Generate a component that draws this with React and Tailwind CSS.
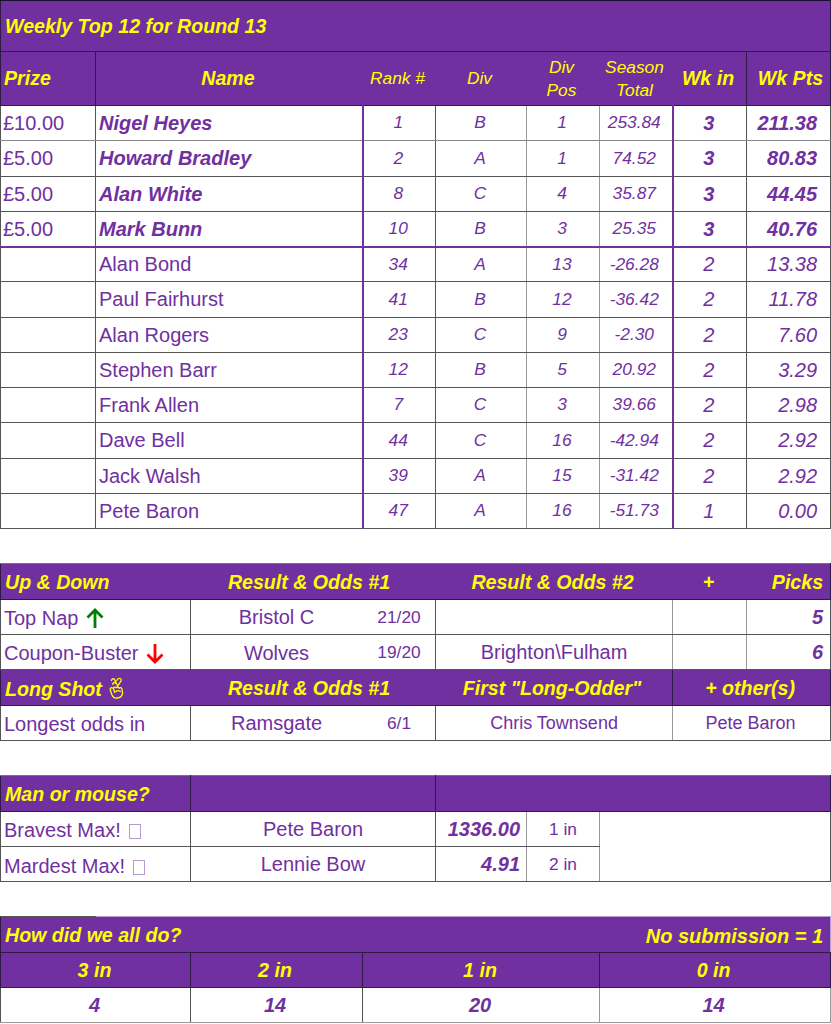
const purple = "text-[#7030a0]";

const top4 = [
  ["£10.00", "Nigel Heyes", "1", "B", "1", "253.84", "3", "211.38"],
  ["£5.00", "Howard Bradley", "2", "A", "1", "74.52", "3", "80.83"],
  ["£5.00", "Alan White", "8", "C", "4", "35.87", "3", "44.45"],
  ["£5.00", "Mark Bunn", "10", "B", "3", "25.35", "3", "40.76"],
];

const others = [
  ["Alan Bond", "34", "A", "13", "-26.28", "2", "13.38"],
  ["Paul Fairhurst", "41", "B", "12", "-36.42", "2", "11.78"],
  ["Alan Rogers", "23", "C", "9", "-2.30", "2", "7.60"],
  ["Stephen Barr", "12", "B", "5", "20.92", "2", "3.29"],
  ["Frank Allen", "7", "C", "3", "39.66", "2", "2.98"],
  ["Dave Bell", "44", "C", "16", "-42.94", "2", "2.92"],
  ["Jack Walsh", "39", "A", "15", "-31.42", "2", "2.92"],
  ["Pete Baron", "47", "A", "16", "-51.73", "1", "0.00"],
];

const Cols = () => (
  <colgroup>
    <col className="w-[95px]" />
    <col className="w-[95px]" />
    <col className="w-[172px]" />
    <col className="w-[73px]" />
    <col className="w-[91px]" />
    <col className="w-[73px]" />
    <col className="w-[73px]" />
    <col className="w-[74px]" />
    <col className="w-[84px]" />
  </colgroup>
);

const Sheet = ({ children, className = "" }) => (
  <table className={`table-fixed border-collapse w-[830px] ${className}`}>
    <Cols />
    <tbody>{children}</tbody>
  </table>
);

// purple header cell
const H = ({ children, className = "", ...rest }) => (
  <td
    className={`bg-[#7030a0] text-[#ffff00] italic border border-[#2f1a45] p-0 whitespace-nowrap ${className}`}
    {...rest}
  >
    {children}
  </td>
);

// white body cell
const C = ({ children, className = "", ...rest }) => (
  <td
    className={`${purple} border border-[#555] p-0 leading-none whitespace-nowrap ${className}`}
    {...rest}
  >
    {children}
  </td>
);

const grey = "border-l-[#999] border-r-[#999]";
const thickL = "border-l-2 border-l-[#7030a0]";
const bold = "text-[19.6px] font-bold leading-none";
const head = `${bold} pt-[2px]`;
const small = "text-[17.33px]";

const Ranks = ({ rank, div, pos, total, thickBottom }) => (
  <>
    <C className={`text-center italic pr-[2px] ${small} ${thickL} ${thickBottom}`}>{rank}</C>
    <C className={`text-center italic pr-[2px] ${small} ${grey} ${thickBottom}`}>{div}</C>
    <C className={`text-center italic pr-[2px] ${small} ${grey} ${thickBottom}`}>{pos}</C>
    <C className={`text-center italic pr-[3px] ${small} ${grey} ${thickBottom}`}>{total}</C>
  </>
);

const ArrowUp = () => (
  <svg viewBox="0 0 18 20" className="inline-block w-[18px] h-[20px] ml-[7px] align-[-3px]">
    <path d="M9 20V2M1.500 9.500L9 2l7.500 7.500" fill="none" stroke="#008000" strokeWidth="2.800" />
  </svg>
);

const ArrowDown = () => (
  <svg viewBox="0 0 18 20" className="inline-block w-[18px] h-[20px] ml-[7px] align-[-4px]">
    <path d="M9 0v18M1.500 10.500L9 18l7.500-7.500" fill="none" stroke="#ff0000" strokeWidth="2.800" />
  </svg>
);

const Crossed = () => (
  <svg viewBox="0 0 16 22" className="inline-block w-[16px] h-[22px] ml-[7px] align-[-3px]">
    <path
      d="M2.500 3.500c.2-1.800 2-2.300 3-1l3.500 7M7.500 3.500c1-1.800 2.300-2.500 3.700-2 1.200.5 1.300 1.800.6 2.800L8 10M4 7.500c-.8-1.500 1.300-2.800 2.500-1.300M3.500 11c-1.500-.8-2.800.5-2.200 2l1.700 5c1 2.500 3 3.500 5.500 3 3-.6 5.200-2.500 5-5.500l-.6-3.500c-.3-1.500-2-1.800-2.800-.7-.5-1.300-2.200-1.500-3-.4-.7-1-2.200-.9-2.800.1l1.500 4.500M7 14.500c1-1 3-1 4.500 0"
      fill="none"
      stroke="#ffff00"
      strokeWidth="1.300"
      strokeLinecap="round"
      strokeLinejoin="round"
    />
  </svg>
);

const Tofu = () => (
  <span className="inline-block w-[12px] h-[15px] ml-[8px] border border-[#b79ad0] align-[-2px]" />
);

export default function App() {
  return (
    <div className="w-[831px] bg-white font-['Liberation_Sans',Arial,sans-serif]">
      <Sheet>
        <tr className="h-[51px]">
          <H colSpan={9} className={`${head} pl-[4px] border-t-[#1a1030]`}>
            Weekly Top 12 for Round 13
          </H>
        </tr>
        <tr className="h-[54px]">
          <H className={`${bold} pl-[3px] pt-[1px]`}>Prize</H>
          <H colSpan={2} className={`${bold} text-center border-r-transparent pr-[2px]`}>Name</H>
          <H className={`${small} leading-none text-center border-x-transparent pr-[3px]`}>Rank #</H>
          <H className={`${small} leading-none text-center border-x-transparent pr-[3px]`}>Div</H>
          <H className={`${small} leading-[23px] text-center border-x-transparent pr-[3px]`}>Div<br />Pos</H>
          <H className={`${small} leading-[23px] text-center border-x-transparent pr-[3px]`}>Season<br />Total</H>
          <H className={`${bold} text-center border-l-transparent pr-[3px]`}>Wk in</H>
          <H className={`${bold} text-right pr-[7px]`}>Wk Pts</H>
        </tr>
        {top4.map((r, i) => {
          const tb = i === 3 ? "border-b-2 border-b-[#7030a0]" : i === 0 ? "border-b-[#888]" : "";
          return (
            <tr key={r[1]} className="h-[35.25px]">
              <C className={`text-[20px] pl-[2px] ${tb}`}>{r[0]}</C>
              <C colSpan={2} className={`text-[20px] font-bold italic pl-[3px] ${tb}`}>{r[1]}</C>
              <Ranks rank={r[2]} div={r[3]} pos={r[4]} total={r[5]} thickBottom={tb} />
              <C className={`text-center text-[20px] font-bold italic pr-[2px] ${thickL} ${tb}`}>{r[6]}</C>
              <C className={`text-right text-[20px] font-bold italic pr-[13px] ${tb}`}>{r[7]}</C>
            </tr>
          );
        })}
        {others.map((r) => (
          <tr key={r[0]} className="h-[35.25px]">
            <C />
            <C colSpan={2} className="text-[20px] pl-[3px]">{r[0]}</C>
            <Ranks rank={r[1]} div={r[2]} pos={r[3]} total={r[4]} />
            <C className={`text-center text-[20px] italic pr-[2px] ${thickL}`}>{r[5]}</C>
            <C className="text-right text-[20px] italic pr-[13px]">{r[6]}</C>
          </tr>
        ))}
      </Sheet>

      <Sheet className="mt-[34px]">
        <tr className="h-[36px]">
          <H colSpan={2} className={`${head} pl-[4px] border-r-transparent border-t-[#777]`}>Up &amp; Down</H>
          <H colSpan={2} className={`${head} text-center border-x-transparent border-t-[#777] pr-[8px]`}>Result &amp; Odds #1</H>
          <H colSpan={3} className={`${head} text-center border-x-transparent border-t-[#777] pr-[3px]`}>Result &amp; Odds #2</H>
          <H className={`${head} text-center border-x-transparent border-t-[#777] pr-[2px]`}>+</H>
          <H className={`${head} text-right pr-[7px] border-l-transparent border-t-[#777]`}>Picks</H>
        </tr>
        <tr className="h-[35px]">
          <C colSpan={2} className="text-[20px] pl-[3px] pt-[2px]">Top Nap<ArrowUp /></C>
          <C className="text-[20px] text-center border-r-transparent">Bristol C</C>
          <C className={`${small} text-center pt-[1px]`}>21/20</C>
          <C colSpan={3} className={grey} />
          <C className={grey} />
          <C className="text-right text-[20px] font-bold italic pr-[7px] border-l-[#999]">5</C>
        </tr>
        <tr className="h-[35px]">
          <C colSpan={2} className="text-[20px] pl-[3px] pt-[3px]">Coupon-Buster<ArrowDown /></C>
          <C className="text-[20px] text-center border-r-transparent pt-[1px]">Wolves</C>
          <C className={`${small} text-center pt-[1px]`}>19/20</C>
          <C colSpan={3} className={`text-[20px] text-center ${grey}`}>Brighton\Fulham</C>
          <C className={grey} />
          <C className="text-right text-[20px] font-bold italic pr-[7px] border-l-[#999]">6</C>
        </tr>
        <tr className="h-[36px]">
          <H colSpan={2} className={`${head} pl-[4px] border-r-transparent`}>Long Shot<Crossed /></H>
          <H colSpan={2} className={`${head} text-center border-x-transparent pr-[8px]`}>Result &amp; Odds #1</H>
          <H colSpan={3} className={`${head} text-center border-l-transparent pr-[4px]`}>First "Long-Odder"</H>
          <H colSpan={2} className={`${head} text-center pr-[3px]`}>+ other(s)</H>
        </tr>
        <tr className="h-[35px]">
          <C colSpan={2} className="text-[20px] pl-[3px] pt-[1px]">Longest odds in</C>
          <C className="text-[20px] text-center border-r-transparent">Ramsgate</C>
          <C className={`${small} text-center pt-[1px]`}>6/1</C>
          <C colSpan={3} className={`text-[18px] text-center ${grey}`}>Chris Townsend</C>
          <C colSpan={2} className="text-[18px] text-center pr-[2px] border-l-[#999]">Pete Baron</C>
        </tr>
      </Sheet>

      <Sheet className="mt-[34px]">
        <tr className="h-[36px]">
          <H colSpan={2} className={`${head} pl-[4px] border-t-[#777]`}>Man or mouse?</H>
          <H colSpan={2} className="border-t-[#777]" />
          <H colSpan={5} className="border-t-[#777]" />
        </tr>
        <tr className="h-[35px]">
          <C colSpan={2} className="text-[20px] pl-[3px] pt-[2px]">Bravest Max!<Tofu /></C>
          <C colSpan={2} className="text-[20px] text-center pb-[1px]">Pete Baron</C>
          <C className={`text-right text-[20px] font-bold italic pr-[6px] ${grey}`}>1336.00</C>
          <C className={`text-center ${small} pt-[1px] border-r-[#999]`}>1 in</C>
          <C rowSpan={2} colSpan={3} className="border-l-[#999]" />
        </tr>
        <tr className="h-[35px]">
          <C colSpan={2} className="text-[20px] pl-[3px] pt-[3px]">Mardest Max!<Tofu /></C>
          <C colSpan={2} className="text-[20px] text-center">Lennie Bow</C>
          <C className={`text-right text-[20px] font-bold italic pr-[6px] ${grey}`}>4.91</C>
          <C className={`text-center ${small} pt-[1px] border-r-[#999]`}>2 in</C>
        </tr>
      </Sheet>

      <Sheet className="mt-[34px]">
        <tr className="h-[36px]">
          <H className={`${head} pl-[4px] border-r-transparent border-t-[#555]`}>How did we all do?</H>
          <H colSpan={4} className="border-x-transparent border-t-[#b79ad0]" />
          <H colSpan={4} className={`text-[20px] font-bold leading-none pt-[2px] text-right pr-[7px] border-l-transparent border-t-[#b79ad0] border-r-[#b79ad0]`}>No submission = 1</H>
        </tr>
        <tr className="h-[35px]">
          <H colSpan={2} className={`${head} text-center pr-[2px]`}>3 in</H>
          <H className={`${head} text-center pr-[3px]`}>2 in</H>
          <H colSpan={3} className={`${head} text-center pr-[2px]`}>1 in</H>
          <H colSpan={3} className={`${head} text-center pr-[3px]`}>0 in</H>
        </tr>
        <tr className="h-[35px]">
          <C colSpan={2} className="text-[20px] font-bold italic text-center pr-[2px] border-b-[#999]">4</C>
          <C className="text-[20px] font-bold italic text-center pr-[3px] border-b-[#999]">14</C>
          <C colSpan={3} className="text-[20px] font-bold italic text-center pr-[2px] border-b-[#999] border-r-[#999]">20</C>
          <C colSpan={3} className="text-[20px] font-bold italic text-center pr-[3px] border-b-[#999] border-r-[#999]">14</C>
        </tr>
      </Sheet>
    </div>
  );
}
